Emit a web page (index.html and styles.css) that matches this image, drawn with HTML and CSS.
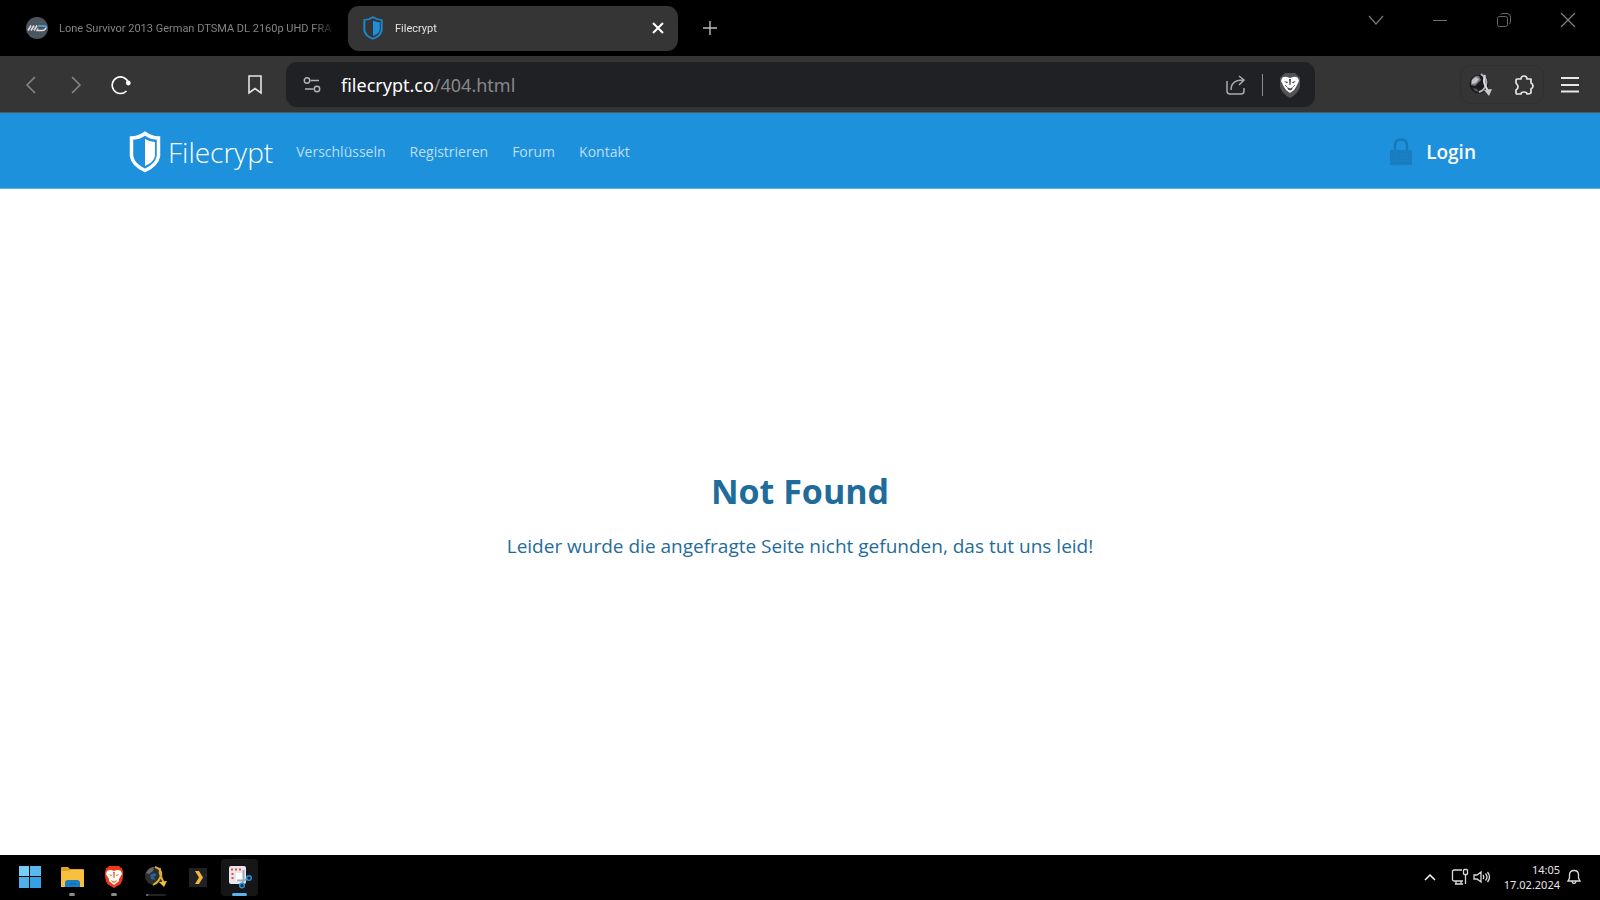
FILE: index.html
```html
<!DOCTYPE html>
<html lang="de">
<head>
    <meta charset="UTF-8">
    <meta name="viewport" content="width=device-width, initial-scale=1.0">
    <title>Filecrypt</title>
    <link rel="stylesheet" href="styles.css">
</head>
<body>
    <div class="tab-strip">
        <button class="tab">
            <svg width="24" height="24" viewBox="0 0 24 24">
                <circle cx="12" cy="12" r="11" fill="#4b535b"/>
                <path d="M4 6h16M2 9h20M2 16h20M5 20h14" stroke="#3d6f91" stroke-width="1" stroke-dasharray="1 2"/>
                <path d="M3 14.500l3-5M6 14.500l3-5M9 14.500l3-5" stroke="#e2dde0" stroke-width="1.600"/>
                <path d="M13 10h6q3 0 2 2" stroke="#56ace4" stroke-width="1.600" fill="none"/>
                <path d="M21 12q-1 2.500-4 2.500h-5l1-2" stroke="#e2dde0" stroke-width="1.400" fill="none"/>
            </svg>
            <span class="tab-title">Lone Survivor 2013 German DTSMA DL 2160p UHD FRA</span>
        </button>
        <div class="tab tab-active">
            <svg width="20" height="24" viewBox="0 0 30 42" preserveAspectRatio="none">
                <path d="M15 2Q21 7 28 7V25Q27 34 15 40Q3 34 2 25V7Q9 7 15 2Z" fill="none" stroke="#1c86cf" stroke-width="3"/>
                <path d="M15 8Q20 11 25 11V25Q24 31 15 35Z" fill="#1d90dc"/>
            </svg>
            <span class="tab-title">Filecrypt</span>
            <button class="icon-btn" aria-label="Tab schließen">
                <svg width="12" height="12" viewBox="0 0 12 12"><path d="M1 1l10 10M11 1L1 11" stroke="#fff" stroke-width="2"/></svg>
            </button>
        </div>
        <button class="icon-btn new-tab" aria-label="Neuer Tab">
            <svg width="16" height="16" viewBox="0 0 16 16"><path d="M8 1v14M1 8h14" stroke="#bdbdbf" stroke-width="1.4"/></svg>
        </button>
        <div class="window-buttons">
            <button class="icon-btn" aria-label="Tabs suchen">
                <svg width="16" height="16" viewBox="0 0 16 16"><path d="M1 4l7 8 7-8" fill="none" stroke="#77777b" stroke-width="1.2"/></svg>
            </button>
            <button class="icon-btn" aria-label="Minimieren">
                <svg width="16" height="16" viewBox="0 0 16 16"><path d="M1 8.5h14" stroke="#6c6c6f"/></svg>
            </button>
            <button class="icon-btn" aria-label="Verkleinern">
                <svg width="16" height="16" viewBox="0 0 16 16" fill="none" stroke="#68686b">
                    <rect x="1.5" y="4.5" width="10" height="10" rx="2"/>
                    <path d="M4.500 2.500Q5.500 1.500 7 1.500h4Q14.500 1.500 14.500 5v4Q14.500 11 13.500 12"/>
                </svg>
            </button>
            <button class="icon-btn" aria-label="Schließen">
                <svg width="16" height="16" viewBox="0 0 16 16"><path d="M1 1l14 14M15 1L1 15" stroke="#828285" stroke-width="1.2"/></svg>
            </button>
        </div>
    </div>

    <div class="toolbar">
        <div class="history">
            <button class="icon-btn" aria-label="Zurück">
                <svg width="20" height="20" viewBox="0 0 20 20"><path d="M14 2L6 10l8 8" fill="none" stroke="#88888c" stroke-width="1.5"/></svg>
            </button>
            <button class="icon-btn" aria-label="Vorwärts">
                <svg width="20" height="20" viewBox="0 0 20 20"><path d="M6 2l8 8-8 8" fill="none" stroke="#88888c" stroke-width="1.5"/></svg>
            </button>
            <button class="icon-btn" aria-label="Neu laden">
                <svg width="20" height="20" viewBox="0 0 20 20">
                    <path d="M17.500 8A8.300 8.300 0 1 0 15.500 16" fill="none" stroke="#fff" stroke-width="1.6"/>
                    <circle cx="17.300" cy="8" r="2.400" fill="#fff"/>
                </svg>
            </button>
        </div>
        <button class="icon-btn bookmark" aria-label="Lesezeichen">
            <svg width="16" height="20" viewBox="0 0 16 20"><path d="M2 1h12v17l-6-4.500L2 18z" fill="none" stroke="#e4e3e7" stroke-width="1.6"/></svg>
        </button>
        <div class="address-bar">
            <button class="icon-btn" aria-label="Website-Informationen">
                <svg width="18" height="18" viewBox="0 0 18 18" fill="none" stroke="#b3b3b6" stroke-width="1.500">
                    <circle cx="4" cy="4.500" r="2.700"/><path d="M7.500 4.500H16"/>
                    <circle cx="14" cy="13" r="2.700"/><path d="M2 13h8.500"/>
                </svg>
            </button>
            <a class="url" href="/404.html">filecrypt.co<span class="url-path">/404.html</span></a>
            <button class="icon-btn" aria-label="Teilen">
                <svg width="20" height="20" viewBox="0 0 20 20" fill="none" stroke="#aaaaad" stroke-width="1.500">
                    <path d="M1 6v10q0 3 3 3h11q3 0 3-3v-3"/>
                    <path d="M5 15Q5 5 17 5M13 1l5 4-5 5"/>
                </svg>
            </button>
            <span class="divider"></span>
            <button class="icon-btn" aria-label="Brave Shields">
                <svg width="22" height="26" viewBox="0 0 22 26">
                    <path d="M6 1h10l5 5v9q-2 7-10 11Q3 22 1 15V6z" fill="#525257"/>
                    <path d="M3 6q2-2 5-1l3 1 3-1q3-1 5 1l1 3-3 6-2 3-4 3-4-3-2-3-3-6z" fill="#fff"/>
                    <path d="M5 9l4 1-1 1.500zM17 9l-4 1 1 1.500zM10 7h2l-.5 6h-1zM8 15l3 1.500 3-1.500-1 2.500-2 1-2-1z" fill="#46464b"/>
                    <path d="M6 13l2 2M16 13l-2 2" stroke="#68686c"/>
                </svg>
            </button>
        </div>
        <div class="extensions">
            <button class="icon-btn" aria-label="JDownloader">
                <svg width="24" height="24" viewBox="0 0 24 24">
                    <circle cx="11" cy="11" r="9.500" fill="#1b1b1d"/>
                    <path d="M3 8q3-6 8-5l2 4-3 3-3 3-4-1z" fill="#77777b"/>
                    <path d="M4 7l4-3 3 2-3 4-4 1z" fill="#c4c4c8"/>
                    <path d="M5 15l4 1 2 3-4-1z" fill="#56565a"/>
                    <path d="M13 1q7 5 5 11-2 6-7 7" fill="none" stroke="#b6b3ba" stroke-width="2"/>
                    <path d="M17 2q-2 6 0 10l3 6" fill="none" stroke="#ddd8df" stroke-width="2"/>
                    <path d="M16 17l8-1-3 7z" fill="#cbc7cf"/>
                </svg>
            </button>
            <button class="icon-btn" aria-label="Erweiterungen">
                <svg width="20" height="20" viewBox="0 0 20 20">
                    <path d="M3 4h4q0-3 3-3t3 3h4v4q2 1 2 3t-2 3v4q-1 1-4 1 0-2-3-2t-3 2H3q-1 0-1-1v-3q2-1 2-3T2 8V5q0-1 1-1z" fill="none" stroke="#e7e6ea" stroke-width="1.700" stroke-linejoin="round"/>
                </svg>
            </button>
        </div>
        <button class="icon-btn menu" aria-label="Menü">
            <svg width="20" height="20" viewBox="0 0 20 20"><path d="M1 3h18M1 10h18M1 16.500h18" stroke="#e8e7eb" stroke-width="1.800"/></svg>
        </button>
    </div>

    <header class="site-header">
        <a class="logo" href="/">
            <svg width="32" height="42" viewBox="0 0 32 42">
                <path d="M16 2.500Q22 7 29.500 7V25Q28 34 16 39.500Q4 34 2.500 25V7Q10 7 16 2.500Z" fill="none" stroke="#fff" stroke-width="3.500"/>
                <path d="M16 8Q21 11 26 11V25Q25 31 16 35Z" fill="#fff"/>
            </svg>
            <span>Filecrypt</span>
        </a>
        <nav class="site-nav">
            <a href="#">Verschlüsseln</a>
            <a href="#">Registrieren</a>
            <a href="#">Forum</a>
            <a href="#">Kontakt</a>
        </nav>
        <a class="login" href="#">
            <svg width="22" height="28" viewBox="0 0 22 28">
                <path d="M5 13V8q0-6.500 6-6.500T17 8v5" fill="none" stroke="#1a77b5" stroke-width="2.400"/>
                <rect x="0" y="12" width="22" height="15" rx="1" fill="#1a7dc0"/>
                <path d="M4 17h15M5 20h14M4 23h15" stroke="#1b8bd5" stroke-dasharray="1 2"/>
            </svg>
            <span>Login</span>
        </a>
    </header>

    <main class="content">
        <h1>Not Found</h1>
        <p>Leider wurde die angefragte Seite nicht gefunden, das tut uns leid!</p>
    </main>

    <footer class="taskbar">
        <div class="apps">
            <button class="app" aria-label="Start">
                <svg width="24" height="24" viewBox="0 0 24 24">
                    <path d="M1 1h10v10H1z" fill="#78cdf6"/><path d="M12 1h11v10H12z" fill="#59b9ef"/>
                    <path d="M1 12h10v11H1z" fill="#4eb0eb"/><path d="M12 12h11v11H12z" fill="#35a0e4"/>
                </svg>
            </button>
            <button class="app running" aria-label="Explorer">
                <svg width="24" height="24" viewBox="0 0 24 24">
                    <path d="M1 3q0-1 1-1h6l2 2h13q1 0 1 1v16q0 1-1 1H1z" fill="#dda42c"/>
                    <path d="M1 6h8l2-1h13v17H1z" fill="#f8c03f"/>
                    <path d="M5 22v-4q0-3 3-3h9q3 0 3 3v4z" fill="#1b7dc5"/>
                    <path d="M9 19h7" stroke="#1568a8" stroke-width="1"/>
                </svg>
            </button>
            <button class="app running" aria-label="Brave">
                <svg width="24" height="24" viewBox="0 0 24 24">
                    <path d="M7 1h10l2 2h1l1 4v2q0 9-4 11l-5 3-5-3Q3 18 3 9V7l1-4h1z" fill="#f03b17"/>
                    <path d="M5 6q3-2 7 0 4-2 7 0l1 3-3 5v2l-5 4-5-4v-2L4 9z" fill="#fff"/>
                    <path d="M7 9l3 1-1 1.500zM17 9l-3 1 1 1.500zM11 7h2l-.5 6h-1zM9 15l3 1.500 3-1.500-1 2-2 1-2-1z" fill="#e8703f"/>
                </svg>
            </button>
            <button class="app partial" aria-label="JDownloader">
                <svg width="24" height="24" viewBox="0 0 24 24">
                    <circle cx="10" cy="11" r="9" fill="#2d2e30"/>
                    <path d="M2 8q3-6 8-6l-1 4-4 3z" fill="#68696c"/>
                    <path d="M6 10l4-2 3 2-3 2 1 3-4-1z" fill="#276391"/>
                    <path d="M11 2q7 2 6 8-1 6-8 10M16 3q-1 5 1 9l3 6" fill="none" stroke="#dfac37" stroke-width="2"/>
                    <path d="M15 17l8-1-3 6z" fill="#f4bf3e"/>
                </svg>
            </button>
            <button class="app" aria-label="Plex">
                <svg width="24" height="24" viewBox="0 0 24 24">
                    <rect x="3" y="3" width="18" height="19" fill="#202124"/>
                    <path d="M9 6h4l4 6.500-4 6.500H9l4-6.500z" fill="#f3b43a"/>
                </svg>
            </button>
            <button class="app app-active" aria-label="Snipping Tool">
                <svg width="24" height="24" viewBox="0 0 24 24">
                    <rect x="1" y="1" width="17" height="18" rx="2" fill="#e9e4ed"/>
                    <path d="M3 4.500h11M4.500 8v6" fill="none" stroke="#d85a32" stroke-width="2" stroke-dasharray="2 2"/>
                    <path d="M8 8h7v9H8z" fill="#fff"/>
                    <path d="M15.500 5v10l-1 3M9 15.500h7l4-2" fill="none" stroke="#9daab8" stroke-width="2"/>
                    <circle cx="14" cy="20.500" r="2.300" fill="#122639" stroke="#2992d4" stroke-width="1.500"/>
                    <circle cx="21" cy="13" r="2.300" fill="#122639" stroke="#2992d4" stroke-width="1.500"/>
                </svg>
            </button>
        </div>
        <div class="tray">
            <button class="icon-btn" aria-label="Ausgeblendete Symbole">
                <svg width="12" height="12" viewBox="0 0 12 12"><path d="M1 9l5-5 5 5" fill="none" stroke="#fff" stroke-width="1.500"/></svg>
            </button>
            <button class="icon-btn tray-pair" aria-label="Netzwerk und Lautstärke">
                <svg width="18" height="18" viewBox="0 0 18 18" fill="none" stroke="#ddd8dd" stroke-width="1.300">
                    <path d="M11 2H3q-1.500 0-1.500 1.500v8Q1.500 13 3 13h9M5 13v3M10 13v3M4 16h8"/>
                    <rect x="12.500" y="1.500" width="4" height="5" rx="1"/><path d="M14.500 7v9"/>
                </svg>
                <svg width="18" height="18" viewBox="0 0 18 18" fill="none" stroke="#ddd8dd" stroke-width="1.300">
                    <path d="M1 7h3l4-3v10l-4-3H1zM10 7q1.500 2 0 4M12.500 5.500q3 3.500 0 7M14.500 4q4 5 0 10"/>
                </svg>
            </button>
            <div class="clock"><time>14:05</time><time>17.02.2024</time></div>
            <button class="icon-btn" aria-label="Benachrichtigungen">
                <svg width="14" height="16" viewBox="0 0 14 16" fill="none" stroke="#ddd8dd" stroke-width="1.300">
                    <path d="M1 12l1.500-3V6q0-4.500 4.500-4.500T11.500 6v3l1.500 3zM5 12.500q.5 2 2 2t2-2"/>
                </svg>
            </button>
        </div>
    </footer>
</body>
</html>
```

FILE: styles.css
```css
* {
    box-sizing: border-box;
}
body {
    margin: 0;
    min-height: 100vh;
    display: flex;
    flex-direction: column;
    font-family: "Open Sans", "Noto Sans", sans-serif;
    background-color: #fff;
}
button {
    padding: 0;
    border: none;
    background: none;
    font: inherit;
    cursor: pointer;
}
a {
    text-decoration: none;
}
svg {
    display: block;
    flex: none;
}
.icon-btn {
    display: flex;
    align-items: center;
    flex: none;
}

/* browser tabs */
.tab-strip {
    display: flex;
    align-items: center;
    height: 56px;
    padding: 0 24px 0 8px;
    background-color: #000;
    font-family: Roboto, "Noto Sans", sans-serif;
    font-size: 11px;
}
.tab {
    display: flex;
    align-items: center;
    width: 340px;
    height: 45px;
    padding: 0 12px 0 17px;
    color: #838387;
    text-align: left;
}
.tab .tab-title {
    flex: 1;
    margin-left: 10px;
    overflow: hidden;
    white-space: nowrap;
    mask-image: linear-gradient(to right, #000 92%, transparent);
}
.tab-active {
    width: 330px;
    padding: 0 14px 0 15px;
    border-radius: 11px;
    background-color: #353535;
    color: #e2e2e5;
}
.tab-active .tab-title {
    margin-left: 12px;
}
.new-tab {
    margin-left: 24px;
}
.window-buttons {
    display: flex;
    align-self: flex-start;
    gap: 48px;
    margin-left: auto;
    padding-top: 12px;
}

/* browser toolbar */
.toolbar {
    display: flex;
    align-items: center;
    height: 57px;
    padding: 1px 20px 0 21px;
    background-color: #353535;
    border-bottom: 1px solid #55595d;
}
.history {
    display: flex;
    gap: 25px;
}
.bookmark {
    margin-left: 116px;
}
.address-bar {
    display: flex;
    align-items: center;
    flex: 1;
    height: 45px;
    margin-left: 23px;
    padding: 0 14px 0 17px;
    border-radius: 11px;
    background-color: #202124;
}
.url {
    flex: 1;
    margin-left: 20px;
    font-family: "Noto Sans", sans-serif;
    font-size: 18px;
    color: #fff;
}
.url-path {
    color: #88888b;
}
.divider {
    width: 1px;
    height: 22px;
    margin: 0 16px;
    background-color: #8f8b8f;
}
.extensions {
    display: flex;
    align-items: center;
    gap: 22px;
    height: 39px;
    margin-left: 145px;
    padding: 0 9px 0 7px;
    border: 1px solid #303031;
    border-radius: 11px;
}
.menu {
    margin-left: 16px;
}

/* site */
.site-header {
    display: flex;
    align-items: center;
    height: 76px;
    padding: 2px 124px 0 129px;
    background-color: #1d91dc;
    border-bottom: 1px solid #61b2e7;
}
.logo {
    display: flex;
    align-items: center;
    gap: 7px;
    color: #fff;
    font-size: 28px;
    font-weight: 300;
}
.site-nav {
    display: flex;
    gap: 24px;
    margin-left: 23px;
}
.site-nav a {
    color: #bcdff5;
    font-size: 14px;
}
.login {
    display: flex;
    align-items: center;
    gap: 14px;
    margin-left: auto;
    color: #fff;
    font-size: 19px;
    font-weight: 600;
}
.content {
    flex: 1;
    display: flex;
    flex-direction: column;
    align-items: center;
    justify-content: center;
    padding-bottom: 16px;
    color: #1f6c9b;
    text-align: center;
}
.content h1 {
    margin: 0 0 18px;
    font-size: 34px;
    line-height: 46px;
}
.content p {
    margin: 0;
    font-size: 19px;
    line-height: 28px;
}

/* windows taskbar */
.taskbar {
    display: flex;
    align-items: center;
    justify-content: space-between;
    height: 45px;
    padding: 0 19px 1px 11px;
    background-color: #000;
    font-family: "Noto Sans", sans-serif;
}
.apps {
    display: flex;
    gap: 5px;
}
.app {
    position: relative;
    display: flex;
    align-items: center;
    justify-content: center;
    width: 37px;
    height: 37px;
    border-radius: 4px;
}
.app-active {
    background-color: #161618;
}
.running::after,
.partial::after,
.app-active::after {
    content: "";
    position: absolute;
    bottom: 0;
    width: 6px;
    height: 3px;
    border-radius: 2px;
    background-color: #8c898e;
}
.partial::after {
    width: 20px;
    height: 2px;
    background: linear-gradient(to right, #77747a 2px, #242426 2px);
}
.app-active::after {
    width: 15px;
    background-color: #5eb2ec;
}
.tray {
    display: flex;
    align-items: center;
}
.tray-pair {
    gap: 4px;
    margin: 0 13px 0 15px;
}
.clock {
    display: flex;
    flex-direction: column;
    margin-right: 7px;
    color: #e8e4e8;
    font-size: 11px;
    line-height: 15px;
    text-align: right;
}
```
